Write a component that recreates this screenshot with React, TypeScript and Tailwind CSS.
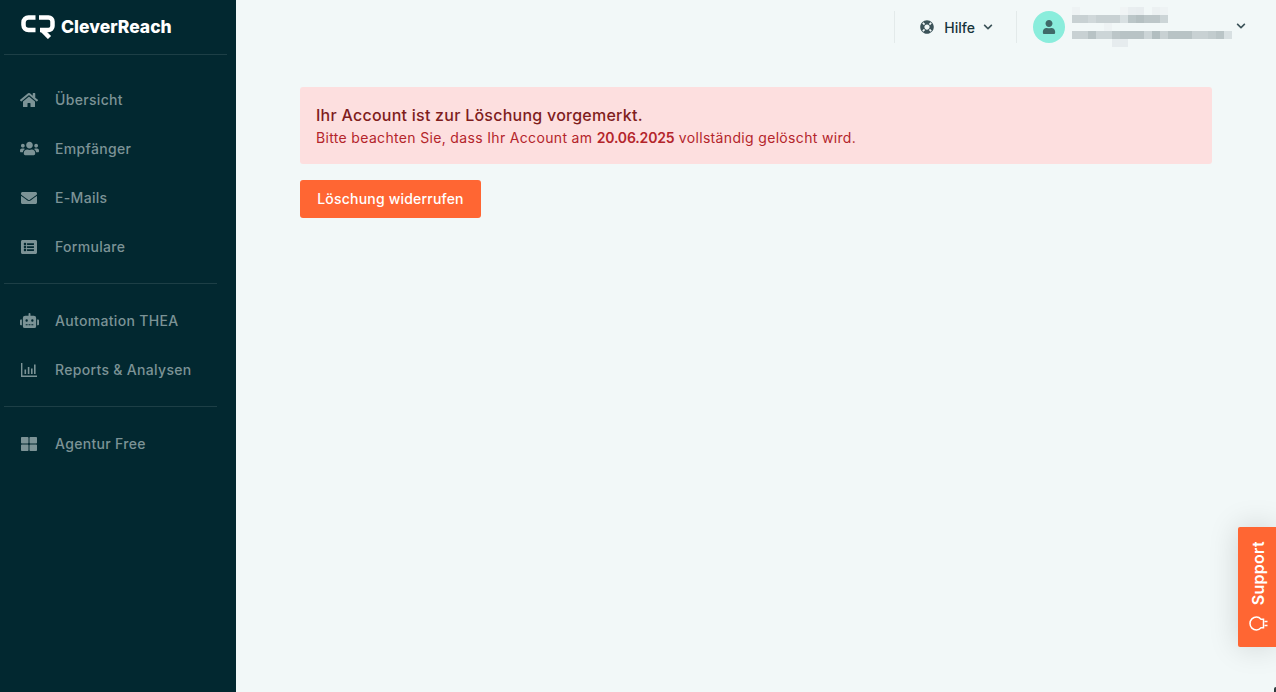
import { FaHome, FaUsers, FaEnvelope, FaListAlt, FaRobot, FaThLarge, FaLifeRing, FaUser, FaChevronDown } from 'react-icons/fa'
import type { ReactNode } from 'react'

function NavItem({ icon, label }: { icon: ReactNode; label: string }) {
  return (
    <a className="flex h-[49px] items-center text-[#7c9396]">
      <span className="flex w-[55px] shrink-0 justify-center pl-[3px] text-[18px]">{icon}</span>
      <span className="text-[14px] font-medium tracking-[0.32px]">{label}</span>
    </a>
  )
}

function ChartIcon() {
  return (
    <svg width="16" height="14" viewBox="0 0 16 14" fill="currentColor">
      <path d="M0 0h1.400v12.400H16V14H0z" />
      <path d="M3.500 6.500h1.600V11H3.500zM6.800 4h1.600v7H6.800zM10 5.500h1.600V11H10zM13 1.500h1.600V11H13z" />
    </svg>
  )
}

function BulbIcon() {
  return (
    <svg width="19" height="15" viewBox="0 0 19 15" fill="none" stroke="currentColor" strokeWidth="1.500">
      <path d="M12 3.200C10.800 1.800 9.300 1 7.500 1a6.500 6.500 0 0 0 0 13c1.800 0 3.300-.8 4.500-2.200h2.500V3.200z" />
      <path d="M15.500 5.500h3M15.500 9.500h3" />
    </svg>
  )
}

function Logo() {
  return (
    <div className="flex h-[54px] items-center pl-[21px] text-white">
      <svg width="34" height="24" viewBox="0 0 34 24" fill="none" stroke="currentColor" strokeWidth="4.500">
        <path d="M14.500 2.500H7.500a5 5 0 0 0-5 5v2.500a5 5 0 0 0 5 5h7" />
        <path d="M19 15h8.500a4 4 0 0 0 4-4V6.500a4 4 0 0 0-4-4H18" />
        <path d="M21 15l7.500 7.500" strokeWidth="4.500" />
      </svg>
      <span className="ml-[6px] text-[17.500px] font-extrabold">CleverReach</span>
    </div>
  )
}

// pixelated stand-in for the blurred account name and mail
function Mosaic({ rows }: { rows: string[][] }) {
  return (
    <div className="flex flex-col">
      {rows.map((row, r) => (
        <div key={r} className="flex h-[8px]">
          {row.map((c, i) => (
            <div key={i} className="w-[8px]" style={{ backgroundColor: c }} />
          ))}
        </div>
      ))}
    </div>
  )
}

const t = 'transparent'
const mosaicRows = [
  ['#eef3f4', t, t, t, t, t, '#f0f4f5', '#e9eef0', '#e8edef', t, '#ecf1f2', '#eef3f4', t, t, t, t, t, t, t, t],
  ['#c8d1d3', '#c8d1d3', '#d0d8da', '#c8d1d3', '#c8d1d3', '#c8d1d3', '#d8e0e2', '#bbc6c8', '#b5c0c2', '#bdc7c9', '#bdc7c9', '#ccd5d7', t, t, t, t, t, t, t, t],
  [t, t, t, t, '#eef3f4', t, t, t, t, t, t, t, t, t, t, t, t, t, t, t],
  ['#c8d1d3', '#c8d1d3', '#b8c3c5', '#ccd5d7', '#ccd5d7', '#bcc6c8', '#b8c3c5', '#b8c3c5', '#b8c3c5', '#ccd5d7', '#b2bec0', '#c8d1d3', '#b8c3c5', '#b8c3c5', '#b8c3c5', '#c8d1d3', '#c8d1d3', '#c2ccce', '#bac5c7', '#d8e0e2'],
  [t, t, t, t, t, '#e6ecee', '#e6ecee', t, t, t, t, t, t, t, t, t, t, t, t, t],
]

export default function App() {
  return (
    <div className="relative flex h-[692px] w-full overflow-hidden bg-[#f2f8f8] font-['Inter',sans-serif]">
      <aside className="flex w-[236px] shrink-0 flex-col bg-[#022830]">
        <Logo />
        <div className="mx-[4px] w-[223px] border-t border-[#1d3f46]" />
        <nav className="flex flex-col pt-[20px]">
          <NavItem icon={<FaHome />} label="Übersicht" />
          <NavItem icon={<FaUsers className="text-[19px]" />} label="Empfänger" />
          <NavItem icon={<FaEnvelope className="text-[16px]" />} label="E-Mails" />
          <NavItem icon={<FaListAlt className="text-[16px]" />} label="Formulare" />
          <div className="mx-[4px] my-[12px] w-[213px] border-t border-[#1d3f46]" />
          <NavItem icon={<FaRobot className="text-[19px]" />} label="Automation THEA" />
          <NavItem icon={<ChartIcon />} label="Reports & Analysen" />
          <div className="mx-[4px] my-[12px] w-[213px] border-t border-[#1d3f46]" />
          <NavItem icon={<FaThLarge className="text-[16px]" />} label="Agentur Free" />
        </nav>
      </aside>

      <main className="flex min-w-0 flex-1 flex-col">
        <header className="flex h-[54px] items-center justify-end">
          <div className="flex h-[32px] items-center border-l border-[#e3eaea] pl-[25px]">
            <FaLifeRing className="text-[14px] text-[#3c5359]" />
            <span className="ml-[10px] text-[14px] font-medium text-[#18343b]">Hilfe</span>
            <FaChevronDown className="ml-[8px] text-[10px] text-[#3c5359]" />
          </div>
          <div className="ml-[23px] flex h-[32px] items-center border-l border-[#e3eaea] pl-[16px]">
            <div className="flex h-[32px] w-[32px] items-center justify-center rounded-full bg-[#8aeddc]">
              <FaUser className="text-[14px] text-[#3f6a68]" />
            </div>
            <div className="ml-[7px]">
              <Mosaic rows={mosaicRows} />
            </div>
            <FaChevronDown className="mb-[2px] ml-[4px] text-[10px] text-[#3c5359]" />
          </div>
          <div className="w-[30px]" />
        </header>

        <div className="px-[64px] pt-[33px]">
          <div className="h-[77px] rounded-[3px] bg-[#fddfdf] px-[16px] pt-[17px]">
            <p className="text-[16px] leading-[22px] font-medium tracking-[0.25px] text-[#7f1d1d]">Ihr Account ist zur Löschung vorgemerkt.</p>
            <p className="text-[14px] leading-[23px] tracking-[0.335px] text-[#b4252b]">
              Bitte beachten Sie, dass Ihr Account am <strong className="font-semibold tracking-[-0.15px]">20.06.2025</strong> vollständig gelöscht wird.
            </p>
          </div>
          <button className="mt-[16px] h-[38px] w-[181px] rounded-[3px] bg-[#ff6633] pb-[1px] text-[14px] font-medium tracking-[0.2px] text-white">
            Löschung widerrufen
          </button>
        </div>
      </main>

      <div className="absolute top-[527px] right-0 flex h-[120px] w-[38px] flex-col items-center justify-end rounded-l-[2px] bg-[#ff6633] pb-[16px] pl-[2px] text-white shadow-[0_0_30px_rgba(0,0,0,0.15)]">
        <span className="mb-[11px] rotate-180 text-[16px] font-semibold tracking-[0.3px] [writing-mode:vertical-rl]">Support</span>
        <BulbIcon />
      </div>
      <div className="absolute right-0 bottom-0 h-[5px] w-[2px] rounded-tl-full bg-[#2d3a3d]" />
    </div>
  )
}
